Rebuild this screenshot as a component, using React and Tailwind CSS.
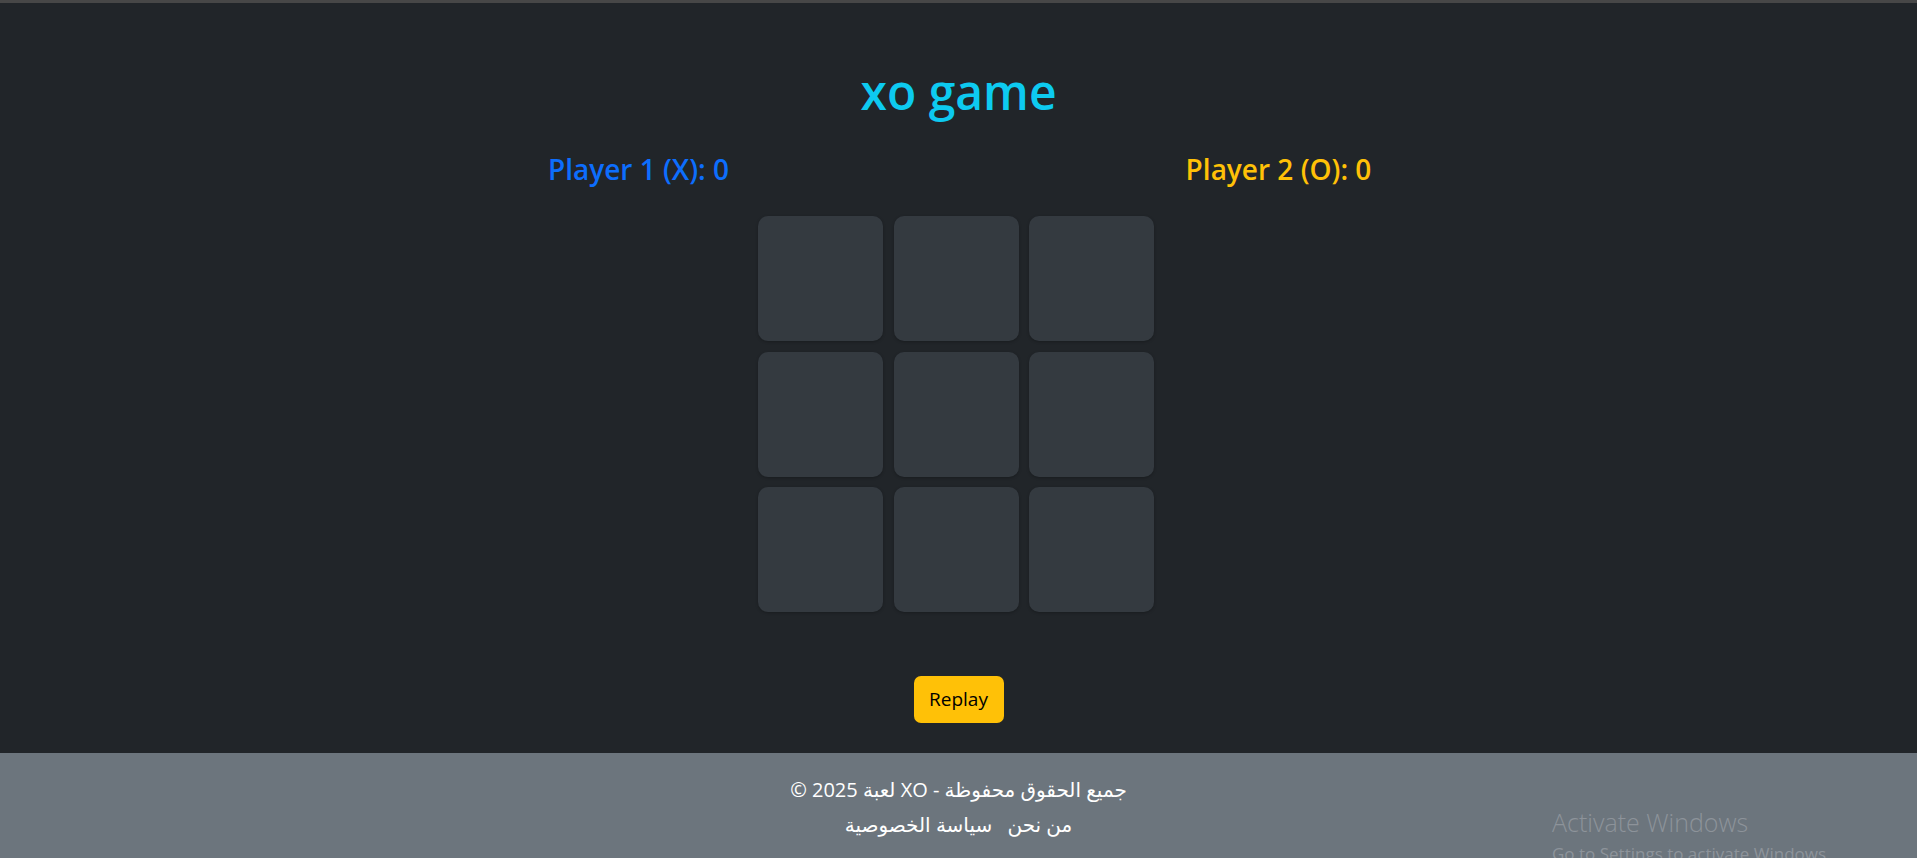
import React from "react";

export default function App() {
  const cells = Array.from({ length: 9 });
  return (
    <div className="relative min-h-[858px] bg-[#212529] overflow-hidden" style={{ fontFamily: '"Open Sans", "DejaVu Sans", sans-serif' }}>
      <div className="h-[3px] bg-[#474747]" />
      <main className="flex flex-col items-center">
        <h1 className="mt-[60px] text-[48px] leading-[58px] font-semibold text-[#0dcaf0]">xo game</h1>
        <div className="mt-[31px] grid w-[1280px] grid-cols-2 text-center text-[28px] leading-[34px] font-semibold">
          <div className="text-[#0d6efd]">Player 1 (X): 0</div>
          <div className="text-[#ffc107]">Player 2 (O): 0</div>
        </div>
        <div className="mt-[30px] mr-[5px] grid grid-cols-[125px_125px_125px] gap-[10.5px]">
          {cells.map((_, i) => (
            <div key={i} className="h-[125px] w-[125px] rounded-[10px] bg-[#343a40] shadow-[0_1px_3px_rgba(0,0,0,0.25)]" />
          ))}
        </div>
        <button className="mt-[64px] mb-[30px] flex h-[47px] w-[90px] items-center justify-center rounded-[7px] bg-[#ffc107] text-[19px] text-black">
          Replay
        </button>
      </main>
      <footer className="h-[105px] bg-[#6c757d] pt-[22px] text-center text-[20px] text-white" style={{ fontFamily: '"Open Sans", "DejaVu Sans", sans-serif' }}>
        <p className="leading-[30px]">© 2025 لعبة XO - جميع الحقوق محفوظة</p>
        <p className="mt-[5px] leading-[30px]">
          <span className="mx-[5px]">من نحن</span>{" "}
          <span className="mx-[5px]">سياسة الخصوصية</span>
        </p>
      </footer>
      <div className="absolute left-[1552px] top-[808px] text-[#8d939a]">
        <div className="text-[25px] leading-[29px] font-light">Activate Windows</div>
        <div className="mt-[7px] text-[17px] leading-[20px]">Go to Settings to activate Windows.</div>
      </div>
    </div>
  );
}
